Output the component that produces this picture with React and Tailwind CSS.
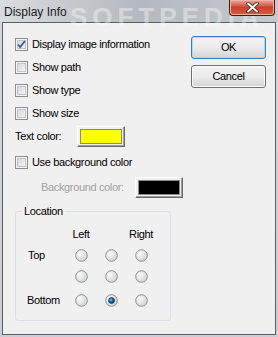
import React from 'react';

const FONT = { fontFamily: '"Liberation Sans", Arial, sans-serif' };

const Checkbox = ( { checked } ) => (
	<svg width="13" height="13" viewBox="0 0 13 13" className="shrink-0">
		<defs>
			<linearGradient id="cbfill" x1="0" y1="0" x2="1" y2="1">
				<stop offset="0" stopColor="#d3d6db" />
				<stop offset="1" stopColor="#f6f6f6" />
			</linearGradient>
		</defs>
		<rect x="0.5" y="0.5" width="12" height="12" fill="#f4f4f4" stroke="#8e8f8f" />
		<rect x="2.5" y="2.5" width="8" height="8" fill="url(#cbfill)" stroke="#c2c5ca" />
		{ checked && (
			<path d="M3 6.5 L5.2 9 L10 3" fill="none" stroke="#3d57a0" strokeWidth="1.8" />
		) }
	</svg>
);

const Radio = ( { checked } ) => (
	<svg width="13" height="13" viewBox="0 0 13 13" className="shrink-0">
		<defs>
			<radialGradient id="rdfill" cx="0.35" cy="0.35" r="0.7">
				<stop offset="0" stopColor="#fbfbfb" />
				<stop offset="1" stopColor="#cfd1d4" />
			</radialGradient>
			<radialGradient id="rddot" cx="0.4" cy="0.4" r="0.6">
				<stop offset="0" stopColor="#7fd0f5" />
				<stop offset="0.5" stopColor="#1a6fa8" />
				<stop offset="1" stopColor="#0c3357" />
			</radialGradient>
		</defs>
		<circle cx="6.5" cy="6.5" r="5.8" fill="url(#rdfill)" stroke="#8e8f8f" />
		{ checked && <circle cx="6.5" cy="6.5" r="3" fill="url(#rddot)" stroke="#0f2b4a" strokeWidth="0.6" /> }
	</svg>
);

const CheckRow = ( { label, checked } ) => (
	<div className="flex h-[23px] items-center gap-[4px]">
		<Checkbox checked={ checked } />
		<span>{ label }</span>
	</div>
);

const ColorButton = ( { color } ) => (
	<div className="h-[21px] w-[48px] border border-t-white border-l-white border-r-[#696969] border-b-[#696969] bg-[#f0f0f0] p-[2px] shadow-[inset_-1px_-1px_0_#a0a0a0]">
		<div className="h-full w-full border border-[#8a8a8a]" style={ { backgroundColor: color } } />
	</div>
);

const PushButton = ( { label, isDefault } ) => (
	<button
		className={ isDefault
			? 'h-[23px] w-[75px] rounded-[3px] border border-[#3c7fb1] bg-gradient-to-b from-[#f2f2f2] via-[#ebebeb] to-[#d4d4d4] text-black shadow-[inset_0_0_0_1px_#a3dcf5]'
			: 'h-[23px] w-[75px] rounded-[3px] border border-[#707070] bg-gradient-to-b from-[#f2f2f2] via-[#ebebeb] to-[#d4d4d4] text-black shadow-[inset_0_0_0_1px_#fcfcfc]' }
	>
		{ label }
	</button>
);

const App = () => {
	return (
		<div className="h-[337px] w-[278px] overflow-hidden bg-gradient-to-b from-[#d5d9de] to-[#c9ced5] text-[11px] tracking-[-0.35px] text-black" style={ FONT }>
			<div className="relative flex h-[22px] items-start justify-between bg-gradient-to-r from-[#d9dcdf] via-[#b4b9bf] to-[#c5c9ce]">
				<span className="pointer-events-none absolute left-[70px] top-[-2px] text-[26px] font-bold tracking-[5px] text-white/40">SOFTPEDIA</span>
				<span className="relative ml-[4px] mt-[3px] text-[12px] tracking-normal text-[#1b1b1b]">Display Info</span>
				<div className="relative mr-[3px] flex h-[16px] w-[46px] items-center justify-center rounded-b-[4px] border border-t-0 border-[#4c1610] bg-gradient-to-b from-[#e8a99d] via-[#c8432e] to-[#d65c3f] shadow-[inset_0_0_0_1px_#f0b3a6]">
					<svg width="13" height="11" viewBox="0 0 13 11">
						<path d="M2 1.5 L11 9.5 M11 1.5 L2 9.5" stroke="#3a2220" strokeWidth="3.6" strokeLinecap="round" />
						<path d="M2 1.5 L11 9.5 M11 1.5 L2 9.5" stroke="#ffffff" strokeWidth="2" strokeLinecap="round" />
					</svg>
				</div>
			</div>

			<div className="mx-[2px] flex h-[313px] border border-[#5e5e5e] bg-[#f0f0f0] pl-[12px] pt-[10px]">
				<div className="flex flex-col">
					<CheckRow label="Display image information" checked={ true } />
					<CheckRow label="Show path" />
					<CheckRow label="Show type" />
					<CheckRow label="Show size" />

					<div className="flex h-[22px] items-center">
						<span className="w-[62px]">Text color:</span>
						<ColorButton color="#ffff00" />
					</div>

					<div className="mt-[4px] flex h-[22px] items-center gap-[4px]">
						<Checkbox />
						<span>Use background color</span>
					</div>

					<div className="mt-[3px] flex h-[22px] items-center pl-[26px]">
						<span className="w-[94px] text-[#a0a0a0]">Background color:</span>
						<ColorButton color="#000000" />
					</div>

					<fieldset className="mt-[7px] w-[156px] rounded-[3px] border border-[#d5dfe5] pb-[7px]">
						<legend className="ml-[6px] px-[2px] leading-[13px]">Location</legend>
						<div className="mt-[5px] grid grid-cols-[50px_30px_30px_30px] grid-rows-[22px_21px_21px_26px] items-center">
							<span />
							<span className="text-center">Left</span>
							<span />
							<span className="text-center">Right</span>

							<span className="pl-[12px]">Top</span>
							<span className="flex justify-center"><Radio /></span>
							<span className="flex justify-center"><Radio /></span>
							<span className="flex justify-center"><Radio /></span>

							<span />
							<span className="flex justify-center"><Radio /></span>
							<span className="flex justify-center"><Radio /></span>
							<span className="flex justify-center"><Radio /></span>

							<span className="pl-[11px]">Bottom</span>
							<span className="flex justify-center"><Radio /></span>
							<span className="flex justify-center"><Radio checked={ true } /></span>
							<span className="flex justify-center"><Radio /></span>
						</div>
					</fieldset>
				</div>

				<div className="ml-auto mr-[9px] mt-[3px] flex flex-col gap-[6px]">
					<PushButton label="OK" isDefault={ true } />
					<PushButton label="Cancel" />
				</div>
			</div>
		</div>
	);
};

export default App;
